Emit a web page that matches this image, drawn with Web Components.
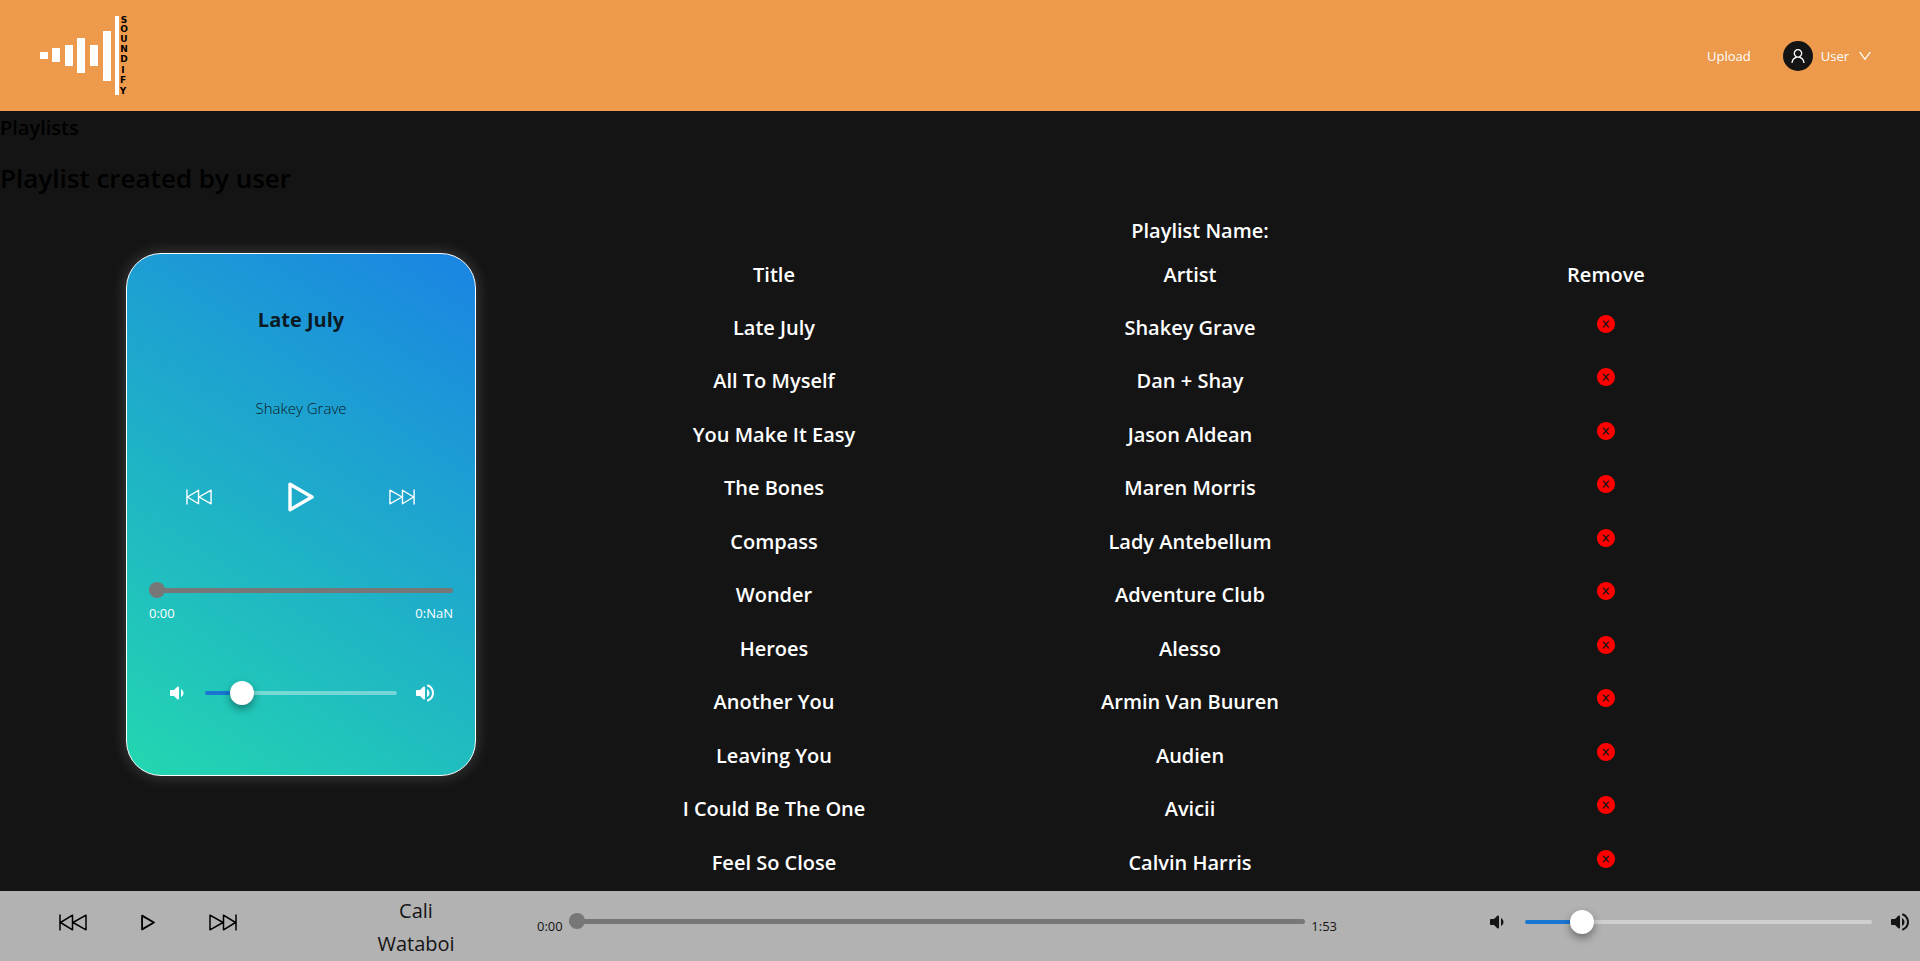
<!DOCTYPE html>
<html lang="en">
<head>
<meta charset="utf-8">
<meta name="viewport" content="width=device-width, initial-scale=1">
<title>Soundify</title>
<style>
html, body { margin: 0; height: 100%; }
body { background: #141414; font-family: "Open Sans", "Noto Sans", sans-serif; font-size: 13px; overflow: hidden; }
</style>
</head>
<body>
<soundify-app></soundify-app>
<script>
const icons = {
  user: ['0 0 1024 1024', '<path fill="currentColor" d="M858.5 763.6a374 374 0 00-80.6-119.5 375.63 375.63 0 00-119.5-80.6c-.4-.2-.8-.3-1.2-.5C719.5 518 760 444.7 760 362c0-137-111-248-248-248S264 225 264 362c0 82.7 40.5 156 102.8 201.1-.4.2-.8.3-1.2.5-44.8 18.9-85 46-119.5 80.6a375.63 375.63 0 00-80.6 119.5A371.7 371.7 0 00136 901.8a8 8 0 008 8.2h60c4.4 0 7.9-3.5 8-7.8 2-77.2 33-149.5 87.8-204.3 56.7-56.7 132-87.9 212.2-87.9s155.5 31.2 212.2 87.9C779 752.7 810 825 812 902.2c.1 4.4 3.6 7.8 8 7.8h60a8 8 0 008-8.2c-1-47.8-10.9-94.3-29.5-138.2zM512 534c-45.9 0-89.1-17.9-121.6-50.4S340 407.9 340 362c0-45.9 17.9-89.1 50.4-121.6S466.1 190 512 190s89.1 17.9 121.6 50.4S684 316.1 684 362c0 45.9-17.9 89.1-50.4 121.6S557.9 534 512 534z"/>'],
  down: ['0 0 1024 1024', '<path fill="currentColor" d="M884 256h-75c-5.1 0-9.9 2.5-12.9 6.6L512 654.2 227.9 262.6c-3-4.1-7.8-6.6-12.9-6.6h-75c-6.5 0-10.3 7.4-6.5 12.7l352.6 486.1c12.8 17.6 39 17.6 51.7 0l352.6-486.1c3.9-5.3.1-12.7-6.4-12.7z"/>'],
  remove: ['64 64 896 896', '<path fill="currentColor" d="M512 64C264.6 64 64 264.6 64 512s200.6 448 448 448 448-200.6 448-448S759.4 64 512 64zm165.4 618.2l-66-.3L512 563.4l-99.3 118.4-66.1.3c-4.4 0-8-3.5-8-8 0-1.9.7-3.7 1.9-5.2l130.1-155L340.5 359a8.32 8.32 0 01-1.9-5.2c0-4.4 3.6-8 8-8l66.1.3L512 464.6l99.3-118.4 66-.3c4.4 0 8 3.5 8 8 0 1.9-.7 3.7-1.9 5.2L553.5 514l130 155c1.2 1.5 1.9 3.3 1.9 5.2 0 4.4-3.6 8-8 8z"/>'],
  quiet: ['0 0 24 24', '<path fill="currentColor" d="M18.5 12c0-1.77-1.02-3.29-2.5-4.03v8.05c1.48-.73 2.5-2.25 2.5-4.02zM5 10v4c0 .55.45 1 1 1h3l3.29 3.29c.63.63 1.71.18 1.71-.71V6.41c0-.89-1.08-1.34-1.71-.71L9 9H6c-.55 0-1 .45-1 1z"/>'],
  loud: ['0 0 24 24', '<path fill="currentColor" d="M3 10v4c0 .55.45 1 1 1h3l3.29 3.29c.63.63 1.71.18 1.71-.71V6.41c0-.89-1.08-1.34-1.71-.71L7 9H4c-.55 0-1 .45-1 1zm13.5 2c0-1.77-1.02-3.29-2.5-4.03v8.05c1.48-.73 2.5-2.25 2.5-4.02zM14 4.45v.2c0 .38.25.71.6.85C17.18 6.53 19 9.06 19 12s-1.82 5.47-4.4 6.5c-.36.14-.6.47-.6.85v.2c0 .63.63 1.07 1.21.85C18.6 19.11 21 15.84 21 12s-2.4-7.11-5.79-8.4c-.58-.23-1.21.22-1.21.85z"/>'],
  prev: ['0 0 28 17', '<g fill="none" stroke="currentColor" stroke-width="1.5" stroke-linejoin="round" stroke-linecap="round"><path d="M1 1v15M13.5 1.2v14.6L1.5 8.5zM27 1.2v14.6L14 8.5z"/></g>'],
  next: ['0 0 28 17', '<g fill="none" stroke="currentColor" stroke-width="1.5" stroke-linejoin="round" stroke-linecap="round"><path d="M27 1v15M14.5 1.2v14.6l12-7.3zM1 1.2v14.6L14 8.5z"/></g>'],
  play: ['0 0 26 30', '<path fill="none" stroke="currentColor" stroke-width="3.4" stroke-linejoin="round" d="M2 2.2v25.6L24 15z"/>']
};

const define = (name, html, setup) => {
  const template = document.createElement('template');
  template.innerHTML = html;
  customElements.define(name, class extends HTMLElement {
    connectedCallback() {
      if (this.shadowRoot) return;
      const root = this.attachShadow({ mode: 'open' });
      root.append(template.content.cloneNode(true));
      if (setup) setup(root, this);
    }
  });
};

define('app-icon', `<style>:host{display:inline-flex;flex:none} svg{display:block;width:100%;height:100%}</style><svg aria-hidden="true"></svg>`,
  (root, host) => {
    const [box, body] = icons[host.getAttribute('name')];
    const svg = root.querySelector('svg');
    svg.setAttribute('viewBox', box);
    svg.innerHTML = body;
  });

define('soundify-logo', `<style>
  :host{display:block} a,svg{display:block}
  text{font:bold 9px "DejaVu Sans",sans-serif;text-anchor:middle;fill:#000}
</style>
<a href="#" aria-label="Soundify home"><svg width="90" height="82" viewBox="0 1 90 82" fill="#fff">
  <rect x="1" y="38" width="8" height="7"/><rect x="13" y="34" width="8" height="14"/>
  <rect x="26" y="31" width="8" height="21"/><rect x="38" y="24" width="8" height="35"/>
  <rect x="51" y="31" width="8" height="21"/><rect x="64" y="17" width="8" height="50"/>
  <rect x="76" y="2" width="4" height="79"/>
  <text x="85" y="9">S</text><text x="85" y="18">O</text><text x="85" y="28">U</text><text x="85" y="38">N</text>
  <text x="85" y="48">D</text><text x="84" y="59">I</text><text x="84" y="69">F</text><text x="84" y="80">Y</text>
</svg></a>`);

define('app-header', `<style>
  :host{display:flex;align-items:center;justify-content:space-between;height:111px;padding:0 47px 0 39px;background:#ed9a4c;color:#fff;box-sizing:border-box}
  nav{display:flex;align-items:center;gap:32px}
  a{color:inherit;text-decoration:none}
  button{display:flex;align-items:center;gap:8px;padding:0;border:0;background:none;color:inherit;font:inherit}
  .avatar{display:flex;align-items:center;justify-content:center;width:30px;height:30px;border-radius:50%;background:#141414}
  .avatar app-icon{width:18px;height:18px}
  .arrow{width:16px;height:16px}
</style>
<soundify-logo></soundify-logo>
<nav><a href="#upload">Upload</a>
<button type="button"><span class="avatar"><app-icon name="user"></app-icon></span>User<app-icon class="arrow" name="down"></app-icon></button></nav>`);

define('seek-slider', `<style>
  :host{display:flex;min-width:0}
  input{appearance:none;width:100%;height:16px;margin:0;background:none}
  input::-webkit-slider-runnable-track{height:5px;border-radius:3px;background:#777}
  input::-webkit-slider-thumb{appearance:none;width:16px;height:16px;margin-top:-6px;border-radius:50%;background:#777}
</style><input type="range" min="0" max="100" value="0" aria-label="Song position">`);

define('volume-control', `<style>
  :host{display:flex;align-items:center;gap:16px}
  app-icon{width:24px;height:24px}
  input{appearance:none;flex:1;min-width:0;height:24px;margin:0;background:none}
  input::-webkit-slider-runnable-track{height:4px;border-radius:2px;background:linear-gradient(to right,#1976d2 var(--level),rgba(255,255,255,.38) var(--level))}
  input::-webkit-slider-thumb{appearance:none;width:24px;height:24px;margin-top:-10px;border-radius:50%;background:#fff;box-shadow:0 4px 8px rgba(0,0,0,.4)}
</style><app-icon name="quiet"></app-icon><input type="range" min="0" max="100" aria-label="Volume"><app-icon name="loud"></app-icon>`,
  (root, host) => {
    const input = root.querySelector('input');
    const update = () => input.style.setProperty('--level', input.value + '%');
    input.value = host.getAttribute('value');
    input.addEventListener('input', update);
    update();
  });

define('transport-controls', `<style>
  :host{display:flex;align-items:center;justify-content:space-between}
  button{display:flex;padding:0;border:0;background:none;color:inherit}
  .skip{width:var(--skip,28px);height:var(--skip-height,17px)}
  .play{width:var(--play,14px);height:var(--play-height,17px)}
</style>
<button type="button" aria-label="Previous"><app-icon class="skip" name="prev"></app-icon></button>
<button type="button" aria-label="Play"><app-icon class="play" name="play"></app-icon></button>
<button type="button" aria-label="Next"><app-icon class="skip" name="next"></app-icon></button>`);

define('song-card', `<style>
  :host{display:flex;flex-direction:column;width:350px;padding:48px 22px 70px;border:1px solid #fff;border-radius:35px;box-sizing:border-box;color:#fff;
    background:linear-gradient(33deg,#23d7b0,#1a84e3);box-shadow:0 0 16px rgba(255,255,255,.2)}
  h2{margin:0;text-align:center;font-size:20px;line-height:36px;font-weight:700;color:#0b1a22}
  p{margin:55px 0 0;text-align:center;font-size:15px;line-height:30px;font-weight:300;color:#0b1a22}
  transport-controls{margin:59px 38px 0 37px;--skip:26px;--skip-height:16px;--play:26px;--play-height:30px}
  seek-slider{margin-top:70px}
  .times{display:flex;justify-content:space-between;margin-top:5px;line-height:20px}
  volume-control{margin:58px 16px 0}
</style>
<h2><slot name="title"></slot></h2><p><slot name="artist"></slot></p>
<transport-controls></transport-controls>
<seek-slider></seek-slider>
<div class="times"><span>0:00</span><span>0:NaN</span></div>
<volume-control value="15"></volume-control>`);

define('song-table', `<style>
  :host{display:block;color:#fff;font-size:20px;line-height:34px;font-weight:600}
  table{width:100%;table-layout:fixed;border-collapse:collapse;text-align:center}
  th,td{padding:0;font-weight:inherit}
  th{height:51px}
  td{height:51px;padding-top:2px}
  tr:nth-child(even) td{height:52px}
  button{display:flex;margin:0 auto 8px;padding:0;border:0;background:none;color:red}
  app-icon{width:18px;height:18px}
</style>
<table><thead><tr><th scope="col">Title</th><th scope="col">Artist</th><th scope="col">Remove</th></tr></thead><tbody></tbody></table>`,
  root => {
    const songs = [['Late July','Shakey Grave'],['All To Myself','Dan + Shay'],['You Make It Easy','Jason Aldean'],['The Bones','Maren Morris'],['Compass','Lady Antebellum'],['Wonder','Adventure Club'],['Heroes','Alesso'],['Another You','Armin Van Buuren'],['Leaving You','Audien'],['I Could Be The One','Avicii'],['Feel So Close','Calvin Harris']];
    root.querySelector('tbody').innerHTML = songs.map(([title, artist]) =>
      `<tr><td>${title}</td><td>${artist}</td><td><button type="button" aria-label="Remove ${title}"><app-icon name="remove"></app-icon></button></td></tr>`).join('');
  });

define('player-bar', `<style>
  :host{display:grid;grid-template-columns:333fr 166fr 876fr 545fr;align-items:center;height:70px;background:#b2b2b2;color:#141414}
  transport-controls{width:178px;margin:-8px auto 0 59px;color:#000}
  .song{padding-top:2px;text-align:center;font-size:20px;line-height:33px}
  .seek{display:flex;align-items:center;gap:6px;padding:0 38px}
  seek-slider{flex:1;padding-bottom:10px}
  volume-control{margin:-8px 8px 0 110px}
</style>
<transport-controls></transport-controls>
<div class="song"><div>Cali</div><div>Wataboi</div></div>
<div class="seek"><span>0:00</span><seek-slider></seek-slider><span>1:53</span></div>
<volume-control value="14"></volume-control>`);

define('soundify-app', `<style>
  :host{display:flex;flex-direction:column;height:100vh}
  main{flex:1;min-height:0;overflow:hidden;color:#000}
  h1,h2,h3{margin:0;font-weight:600}
  h2{font-size:20px;line-height:34px}
  h1{font-size:26px;line-height:44px;margin-top:11px}
  .content{display:grid;grid-template-columns:350px minmax(0,1fr);column-gap:90px;padding:0 106px 0 126px;align-items:start}
  song-card{margin-top:53px}
  h3{margin:13px 0 0 20px;text-align:center;color:#fff;font-size:20px;line-height:36px}
</style>
<app-header></app-header>
<main>
  <h2>Playlists</h2>
  <h1>Playlist created by user</h1>
  <div class="content">
    <song-card><span slot="title">Late July</span><span slot="artist">Shakey Grave</span></song-card>
    <section><h3>Playlist Name:</h3><song-table></song-table></section>
  </div>
</main>
<player-bar></player-bar>`);
</script>
</body>
</html>
